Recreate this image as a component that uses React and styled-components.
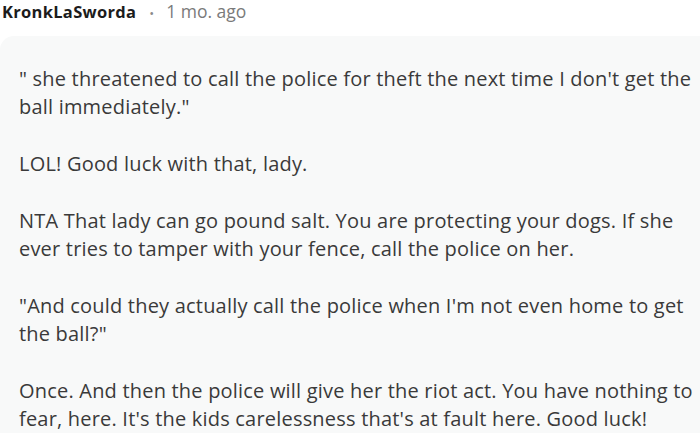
import React from 'react';
import styled, { createGlobalStyle } from 'styled-components';

const GlobalStyle = createGlobalStyle`
  html, body {
    margin: 0;
    padding: 0;
    background: #ffffff;
    overflow: hidden;
  }
`;

const paragraphs = [
  [`" she threatened to call the police for theft the next time I don't get the`, `ball immediately."`],
  [`LOL! Good luck with that, lady.`],
  [
    `NTA That lady can go pound salt. You are protecting your dogs. If she`,
    `ever tries to tamper with your fence, call the police on her.`,
  ],
  [
    `"And could they actually call the police when I'm not even home to get`,
    `the ball?"`,
  ],
  [
    `Once. And then the police will give her the riot act. You have nothing to`,
    `fear, here. It's the kids carelessness that's at fault here. Good luck!`,
  ],
];

const App = () => (
  <S.Wrapper>
    <GlobalStyle />
    <S.Meta>
      <S.Author>KronkLaSworda</S.Author>
      <S.Dot>•</S.Dot>
      <S.Time>1 mo. ago</S.Time>
    </S.Meta>

    <S.Body>
      {paragraphs.map((lines, i) => (
        <S.Paragraph key={i}>
          {lines.map((line, j) => (
            <S.Line key={j}>{line}</S.Line>
          ))}
        </S.Paragraph>
      ))}
    </S.Body>
  </S.Wrapper>
);

const S = {};

S.Wrapper = styled.div`
  width: 700px;
  height: 433px;
  display: flex;
  flex-direction: column;
  font-family: 'Open Sans', 'Noto Sans', sans-serif;
  overflow: hidden;
`;

S.Meta = styled.div`
  display: flex;
  align-items: baseline;
  height: 22px;
  padding: 0 0 0 2px;
  margin-bottom: 14px;
  line-height: 22px;
`;

S.Author = styled.span`
  font-size: 16.5px;
  font-weight: 700;
  letter-spacing: 0.3px;
  color: #1c1c1c;
`;

S.Dot = styled.span`
  color: #8a8a8a;
  font-size: 13px;
  margin: 0 12px 0 13px;
`;

S.Time = styled.span`
  font-size: 17.5px;
  color: #7a7a7a;
`;

S.Body = styled.div`
  flex: 1;
  background: #f8f9f9;
  border-radius: 14px 0 0 0;
  padding: 28.5px 0 0 19px;
  display: flex;
  flex-direction: column;
  gap: 29px;
`;

S.Paragraph = styled.p`
  margin: 0;
  font-size: 20px;
  line-height: 28px;
  letter-spacing: 0.2px;
  color: #3a3a3a;
`;

S.Line = styled.span`
  display: block;
  white-space: nowrap;
`;

export default App;
